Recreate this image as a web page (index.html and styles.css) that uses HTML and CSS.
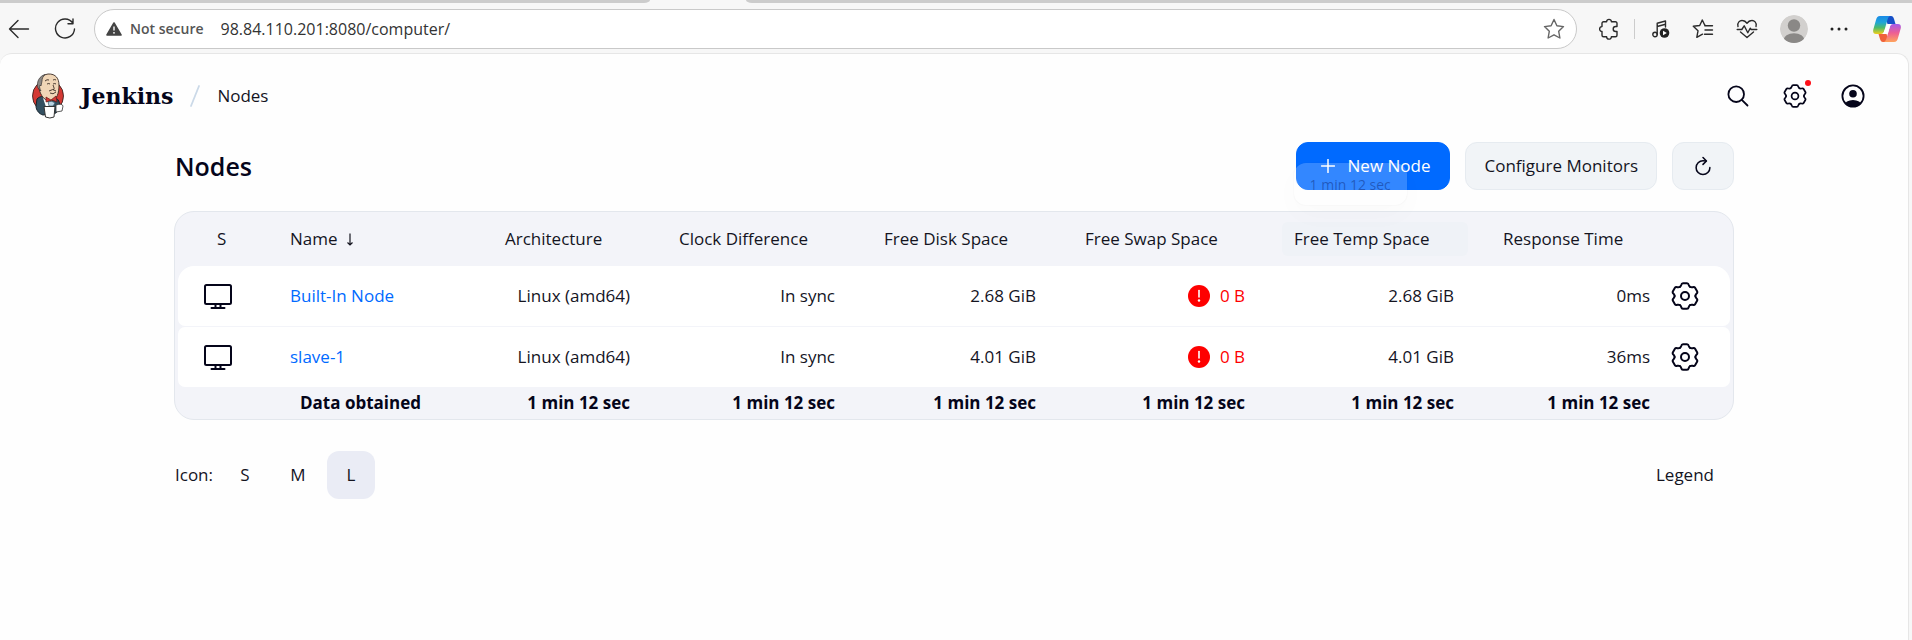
FILE: index.html
```html
<!DOCTYPE html>
<html lang="en">
<head>
<meta charset="utf-8">
<title>Nodes - Jenkins</title>
<link rel="stylesheet" href="styles.css">
</head>
<body>
<svg class="defs" aria-hidden="true">
  <symbol id="gear" viewBox="-14 -14 28 28">
    <g fill="none" stroke="currentColor" stroke-width="2" stroke-linecap="round" stroke-linejoin="round">
      <circle r="4"/>
      <path id="lobe" d="M-5.200-9Q-4.200-9.600-3.800-11-3.400-12.800-2-12.800H2Q3.400-12.800 3.800-11 4.200-9.600 5.200-9"/>
      <use href="#lobe" transform="rotate(60)"/>
      <use href="#lobe" transform="rotate(120)"/>
      <use href="#lobe" transform="rotate(180)"/>
      <use href="#lobe" transform="rotate(240)"/>
      <use href="#lobe" transform="rotate(300)"/>
    </g>
  </symbol>
  <symbol id="monitor" viewBox="0 0 30 27">
    <g fill="none" stroke="#05051a" stroke-width="2" stroke-linejoin="round" stroke-linecap="round">
      <rect x="2" y="2" width="26" height="19" rx="1.500"/>
      <path d="M12.500 21v4M17.500 21v4M8.500 25h13"/>
    </g>
  </symbol>
  <symbol id="alert" viewBox="0 0 22 22">
    <circle cx="11" cy="11" r="11" fill="#fe0000"/>
    <path d="M11 5.500v6.500" stroke="#fff" stroke-width="1.600" stroke-linecap="round"/>
    <circle cx="11" cy="15.500" r="1.200" fill="#fff"/>
  </symbol>
</svg>

<div class="tabstrip"><span class="tab tab-left"></span><span class="tab tab-right"></span></div>
<div class="toolbar">
  <button class="tool back" aria-label="Back"><svg width="22" height="20" viewBox="0 0 22 20"><path d="M20.500 10H1.500M10 1.500 1.500 10l8.500 8.500" class="line"/></svg></button>
  <button class="tool reload" aria-label="Reload"><svg width="22" height="22" viewBox="0 0 22 22"><path d="M18.800 5A9.500 9.500 0 1 0 20.500 11M19 1v4.800h-5" class="line"/></svg></button>
  <div class="address">
    <svg width="16" height="14" viewBox="0 0 16 14"><path d="M8 1 15 13H1z" fill="#444" stroke="#444" stroke-width="1.600" stroke-linejoin="round"/><path d="M8 4.500v4" stroke="#fff" stroke-width="1.400"/><circle cx="8" cy="10.800" r=".9" fill="#fff"/></svg>
    <span class="insecure">Not secure</span>
    <input class="url" type="text" aria-label="Address" value="98.84.110.201:8080/computer/">
    <button class="tool" aria-label="Favorite"><svg width="22" height="22" viewBox="0 0 22 22"><path d="M11 1.500l2.900 6.200 6.600.9-4.800 4.700 1.200 6.700-5.900-3.200-5.900 3.200 1.200-6.700L1.500 8.600l6.600-.9z" class="line soft"/></svg></button>
  </div>
  <div class="extensions">
    <button class="tool puzzle" aria-label="Extensions"><svg width="20" height="22" viewBox="0 0 20 22"><path d="M4.500 3.800H7.600a2.400 2.400 0 0 1 4.800 0H16.500a1.500 1.500 0 0 1 1.500 1.500V8.500h-1.300a2.500 2.500 0 0 0 0 5H18v3.700a1.500 1.500 0 0 1-1.500 1.500h-4.100a2.400 2.400 0 0 1-4.800 0H4.500A1.500 1.500 0 0 1 3 17.200v-3.800a2.400 2.400 0 0 1 0-4.800V5.300a1.500 1.500 0 0 1 1.500-1.500z" class="line"/></svg></button>
    <span class="divider"></span>
    <button class="tool music" aria-label="Media"><svg width="18" height="18" viewBox="0 0 18 18"><circle cx="3" cy="14.500" r="2.200" class="line"/><path d="M5.200 14.500V3.200L13.500 1v6M5.200 6.500l8.300-2.200" class="line"/><circle cx="12.500" cy="13" r="4.800" fill="#222"/><path d="M11 10.700v4.600l3.800-2.300z" fill="#fff"/></svg></button>
    <button class="tool" aria-label="Favorites"><svg width="22" height="20" viewBox="0 0 22 20"><path d="M13.500 6.500 12.800 6.200 10.300 1 7.700 6.500 1.300 7.300 6 11.800 4.800 18.300 10.500 15.200M12.800 6.800H20.500M13 11h7.500M12.500 15.200h8" class="line"/></svg></button>
    <button class="tool" aria-label="Browser essentials"><svg width="22" height="20" viewBox="0 0 22 20"><path d="M2 7.500C.8 3.500 4 1.200 6.500 1.500 9 1.700 10.200 3.200 11 4.200c.8-1 2-2.500 4.500-2.700C18 1.200 21.200 3.500 20 7.500M1.200 10.500h4.600L8.200 6.800l3.600 7 2.400-4.600 1 1.300h5.600M4.500 13l6.500 5.500 6.500-5.500" class="line"/></svg></button>
    <button class="tool" aria-label="Profile"><svg width="28" height="28" viewBox="0 0 28 28"><defs><clipPath id="face"><circle cx="14" cy="14" r="14"/></clipPath></defs><g clip-path="url(#face)"><circle cx="14" cy="14" r="14" fill="#d2d0ce"/><circle cx="14" cy="10.500" r="6.200" fill="#8a8886"/><ellipse cx="14" cy="25" rx="10.500" ry="6.800" fill="#8a8886"/></g></svg></button>
    <button class="tool" aria-label="More"><svg width="18" height="4" viewBox="0 0 18 4"><g fill="#222"><circle cx="2" cy="2" r="1.500"/><circle cx="9" cy="2" r="1.500"/><circle cx="16" cy="2" r="1.500"/></g></svg></button>
    <button class="tool copilot" aria-label="Copilot"><svg width="28" height="26" viewBox="0 0 28 26"><defs>
      <linearGradient id="c1" x1="0" y1="0" x2="0" y2="1"><stop offset="0" stop-color="#1a8ae8"/><stop offset=".35" stop-color="#1fa5d8"/><stop offset=".65" stop-color="#4dbb6a"/><stop offset="1" stop-color="#f2cf1b"/></linearGradient>
      <linearGradient id="c2" x1="0" y1="0" x2="0" y2="1"><stop offset="0" stop-color="#a65be8"/><stop offset=".5" stop-color="#ee5f93"/><stop offset="1" stop-color="#ffa45c"/></linearGradient></defs>
      <path d="M12 0h6c2 0 2.500 1.500 3 3l1.500 5h-8z" fill="#1650c8"/>
      <path d="M16 26h-6c-2 0-2.500-1.500-3-3L5.500 18h8z" fill="#f0623a"/>
      <path d="M7 0h10.500c-1.500 0-2.300 1.500-2.800 3l-3.500 12c-.6 2-1.500 3-3.500 3H3C.5 18-.3 16 .3 13.500L3 4C3.700 1.500 4.700 0 7 0z" fill="url(#c1)"/>
      <path d="M21 26H10.500c1.500 0 2.300-1.500 2.800-3l3.500-12c.6-2 1.500-3 3.500-3H25c2.500 0 3.300 2 2.700 4.500L25 22c-.7 2.500-1.700 4-4 4z" fill="url(#c2)"/><path d="M14.600 8h4c-1 .6-1.500 1.600-1.800 3l-1.600 5.500c-.3 1-.8 1.500-1.800 1.500h-4c1-.6 1.500-1.600 1.800-3z" fill="#fff"/></svg></button>
  </div>
</div>

<div class="page">
  <header class="header">
    <a class="brand" href="#">
      <svg width="34" height="46" viewBox="0 0 34 46">
        <ellipse cx="17" cy="23" rx="15.500" ry="16" fill="#d33833" stroke="#2b1a18" stroke-width=".8"/>
        <path d="M6 26c3-3 6-3 9-2l8 1c4 0 5 3 6 7l-4 8-13 2c-4-1-7-5-7-9z" fill="#335061" stroke="#17232c"/>
        <path d="M9 19C6 12 8 2 17 1c8-.5 11 5 11 11 0 8-2 15-8 16C14 28 11 24 9 19z" fill="#f0d6b7" stroke="#3a2b24" stroke-width=".9"/>
        <path d="M7 15C5 8 9 3 14 1.500c-2 2-3 4-3 6.500l-1 5-1-1c-1 2 0 4 1 6z" fill="#8b8784" stroke="#3c3836" stroke-width=".7"/>
        <path d="M14 8q2-2 4-1M22 7q2-1 3 0M16 11q2-1 3 0M22 11q2-1 3 0M22 12c1 3 2 4 0 5M19 20q3 2 6-1M18 18q4-3 7 0" fill="none" stroke="#3a2b24" stroke-width=".9"/>
        <path d="M12 25l5 4 3 9-4-1z" fill="#fff"/>
        <path d="M15 24l5 3 5-4 1 6-5-2-6 2z" fill="#d33833" stroke="#671815" stroke-width=".7"/>
        <path d="M17 29q4-2 7 1l-2 3h-4z" fill="#b9d3e2" stroke="#335061" stroke-width=".6"/>
        <path d="M25 32q6-2 7 1l-1 5-6 1z" fill="#fff" stroke="#333" stroke-width=".8"/>
        <path d="M13 33.500h11l-1 10.500q-4 2-8.500 0z" fill="#fff" stroke="#333"/>
      </svg>
      <span>Jenkins</span>
    </a>
    <svg class="slash" width="10" height="22" viewBox="0 0 10 22"><path d="M9 1 1 21" stroke="#cbd9e8" stroke-width="1.800" stroke-linecap="round"/></svg>
    <a class="crumb" href="#">Nodes</a>
    <nav class="actions">
      <button class="tool" aria-label="Search"><svg width="22" height="22" viewBox="0 0 22 22"><circle cx="9.200" cy="9.200" r="7.800" class="ink"/><path d="M14.800 14.800 20.500 20.500" class="ink"/></svg></button>
      <button class="tool manage" aria-label="Manage Jenkins"><svg width="24" height="24"><use href="#gear"/></svg><i class="dot"></i></button>
      <button class="tool" aria-label="Account"><svg width="24" height="24" viewBox="0 0 24 24"><defs><clipPath id="user"><circle cx="12" cy="12" r="11"/></clipPath></defs><g clip-path="url(#user)" fill="#05051a"><circle cx="12" cy="9.800" r="3.800"/><ellipse cx="12" cy="21.500" rx="8.500" ry="5.500"/></g><circle cx="12" cy="12" r="10.600" class="ink"/></svg></button>
    </nav>
  </header>

  <main class="main">
    <div class="appbar">
      <h1>Nodes</h1>
      <div class="buttons">
        <button class="btn primary"><svg width="14" height="14" viewBox="0 0 14 14"><path d="M7 .5v13M.5 7h13" stroke="#fff" stroke-width="1.500" stroke-linecap="round"/></svg>New Node</button>
        <button class="btn">Configure Monitors</button>
        <button class="btn refresh" aria-label="Refresh"><svg width="22" height="22" viewBox="0 0 512 512"><path d="M320 146s24.360-12-64-12a160 160 0 10160 160" class="ink thick"/><path d="M256 58l80 80-80 80" class="ink thick"/></svg></button>
        <div class="tooltip">1 min 12 sec</div>
      </div>
    </div>

    <div class="table-wrap">
      <table>
        <colgroup><col class="c-status"><col class="c-name"><col class="c-arch"><col class="c-clock"><col class="c-disk"><col class="c-swap"><col class="c-temp"><col class="c-time"><col class="c-config"></colgroup>
        <thead>
          <tr><th>S</th><th>Name<svg class="sort" width="8" height="13" viewBox="0 0 8 13"><path d="M4 .5v11.500M1.500 9.500 4 12l2.500-2.500" fill="none" stroke="currentColor" stroke-width="1.200"/></svg></th><th>Architecture</th><th>Clock Difference</th><th>Free Disk Space</th><th>Free Swap Space</th><th><span class="hovered">Free Temp Space</span></th><th>Response Time</th><th></th></tr>
        </thead>
        <tbody>
          <tr><td><svg width="30" height="27"><use href="#monitor"/></svg></td><td><a href="#">Built-In Node</a></td><td>Linux (amd64)</td><td>In sync</td><td>2.68 GiB</td><td class="error"><svg width="22" height="22"><use href="#alert"/></svg>0 B</td><td>2.68 GiB</td><td>0ms</td><td><button class="tool" aria-label="Configure Built-In Node"><svg width="28" height="28"><use href="#gear"/></svg></button></td></tr>
          <tr><td><svg width="30" height="27"><use href="#monitor"/></svg></td><td><a href="#">slave-1</a></td><td>Linux (amd64)</td><td>In sync</td><td>4.01 GiB</td><td class="error"><svg width="22" height="22"><use href="#alert"/></svg>0 B</td><td>4.01 GiB</td><td>36ms</td><td><button class="tool" aria-label="Configure slave-1"><svg width="28" height="28"><use href="#gear"/></svg></button></td></tr>
        </tbody>
        <tfoot>
          <tr><th></th><th>Data obtained</th><th>1 min 12 sec</th><th>1 min 12 sec</th><th>1 min 12 sec</th><th>1 min 12 sec</th><th>1 min 12 sec</th><th>1 min 12 sec</th><th></th></tr>
        </tfoot>
      </table>
    </div>

    <div class="footer">
      <span class="label">Icon:</span>
      <div class="sizes"><button>S</button><button>M</button><button class="active">L</button></div>
      <button class="legend">Legend</button>
    </div>
  </main>
</div>
</body>
</html>
```
FILE: styles.css
```css
* { box-sizing: border-box; }
body {
  margin: 0;
  min-height: 100vh;
  display: flex;
  flex-direction: column;
  background: #f7f7f7;
  color: #14141f;
  font: 17px/24px "Open Sans", "Noto Sans", sans-serif;
}
button, input { font: inherit; color: inherit; border: 0; padding: 0; background: none; }
a { text-decoration: none; color: inherit; }
svg { display: block; flex: none; }
.defs { position: absolute; width: 0; height: 0; }
.line { fill: none; stroke: #2b2b2b; stroke-width: 1.4; stroke-linecap: round; stroke-linejoin: round; }
.soft { stroke: #666; }
.ink { fill: none; stroke: #05051a; stroke-width: 1.8; stroke-linecap: round; stroke-linejoin: round; }
.thick { stroke-width: 36; }
.tool { display: flex; align-items: center; justify-content: center; color: #05051a; }

/* Browser chrome */
.tabstrip { display: flex; justify-content: space-between; height: 3px; }
.tab { background: #ccc; }
.tab-left { width: 34%; border-bottom-right-radius: 6px 3px; }
.tab-right { width: 61%; border-bottom-left-radius: 6px 3px; }
.toolbar { display: flex; align-items: center; height: 50px; padding: 2px 11px 0 8px; }
.reload { margin: 0 18px 0 24px; }
.address {
  flex: 1;
  display: flex;
  align-items: center;
  height: 40px;
  padding: 0 11px;
  border: 1px solid #c9c9c9;
  border-radius: 20px;
  background: #fff;
}
.insecure { margin: 0 17px 0 8px; color: #555; font-size: 14px; font-weight: 600; }
.url { flex: 1; min-width: 0; outline: 0; color: #333; font-size: 16px; }
.extensions { display: flex; align-items: center; gap: 22px; margin-left: 22px; }
.divider { width: 1px; height: 20px; margin: 0 -5px 0 -7px; background: #ccc; }
.copilot { margin-left: 3px; }

/* Jenkins page */
.page {
  flex: 1;
  margin-right: 3px;
  border: 1px solid #e6e6e6;
  border-width: 1px 1px 0 0;
  border-radius: 12px 12px 0 0;
  background: #fefefe;
}
.header { display: flex; align-items: center; height: 84px; padding: 0 43px 0 31px; }
.brand { display: flex; align-items: center; gap: 16px; color: #05051a; font: bold 22px/30px "DejaVu Serif", serif; }
.slash { margin: 0 17px; }
.actions { display: flex; align-items: center; gap: 34px; margin-left: auto; }
.manage { position: relative; }
.dot { position: absolute; top: -4px; right: -4px; width: 6px; height: 6px; border-radius: 50%; background: #fe0f17; }
.main { max-width: 1560px; margin: 0 auto; padding-top: 4px; }
.appbar { display: flex; justify-content: space-between; align-items: center; height: 48px; }
h1 { margin: 0 0 0 1px; color: #05051a; font-size: 25px; line-height: 32px; font-weight: 600; }
.buttons { position: relative; display: flex; gap: 15px; }
.btn {
  display: flex;
  align-items: center;
  gap: 13px;
  height: 48px;
  padding: 0 18px;
  border: 1px solid #e6ebf0;
  border-radius: 12px;
  background: #f1f4f7;
}
.primary { padding: 0 19px 0 24px; border-color: #006aff; background: #006aff; color: #fff; font-weight: 500; }
.refresh { padding: 0 19px; }
.tooltip {
  position: absolute;
  left: -2px;
  top: 21px;
  padding: 10px 16px 8px;
  border-radius: 12px;
  background: rgba(255, 255, 255, .2);
  box-shadow: 0 0 2px rgba(0, 0, 0, .06), 0 10px 30px rgba(0, 0, 0, .02);
  color: rgba(0, 0, 60, .35);
  font-size: 14px;
}

/* Node table */
.table-wrap {
  margin-top: 21px;
  padding: 0 3px;
  border: 1px solid #e3e7ed;
  border-radius: 20px;
  background: #f3f4f9;
}
table { width: 100%; table-layout: fixed; border-collapse: separate; border-spacing: 0 1px; }
.c-status { width: 100px; }
.c-name { width: 215px; }
.c-arch { width: 174px; }
.c-clock { width: 205px; }
.c-disk { width: 201px; }
.c-swap { width: 209px; }
.c-temp { width: 209px; }
.c-time { width: 171px; }
.c-config { width: 68px; }
th, td { padding: 0 12px; text-align: left; white-space: nowrap; }
thead th { height: 52px; font-weight: 400; }
thead th:first-child { padding-left: 39px; }
.sort { display: inline-block; margin-left: 8px; vertical-align: -1px; }
.hovered { display: block; margin: 0 11px 0 -12px; padding: 5px 12px; border-radius: 6px; background: #eff2f7; }
tbody td { height: 60px; padding-right: 37px; background: #fff; text-align: right; }
tbody td:first-child { padding: 0 25px; border-radius: 7px 0 0 7px; }
tbody td:nth-child(2) { text-align: left; }
tbody td:last-child { padding: 0 9px; border-radius: 0 7px 7px 0; }
tbody tr:first-child td:first-child { border-top-left-radius: 16px; }
tbody tr:first-child td:last-child { border-top-right-radius: 16px; }
tbody a { color: #006aff; }
.error { color: #fe0000; }
.error svg { display: inline-block; margin-right: 10px; vertical-align: -5px; }
tfoot th { height: 30px; padding-right: 37px; color: #05051a; font-weight: 700; text-align: right; }
tfoot th:nth-child(2) { padding-left: 22px; text-align: left; }
th:nth-child(8), tbody td:nth-child(8) { padding-right: 12px; }

/* Icon size and legend */
.footer { display: flex; align-items: center; margin-top: 31px; }
.label { margin: 0 8px 0 1px; }
.sizes { display: flex; gap: 5px; }
.sizes button { width: 48px; height: 48px; border-radius: 12px; }
.sizes .active { background: #eaecf5; }
.legend { margin-left: auto; padding: 12px 20px; }
```
